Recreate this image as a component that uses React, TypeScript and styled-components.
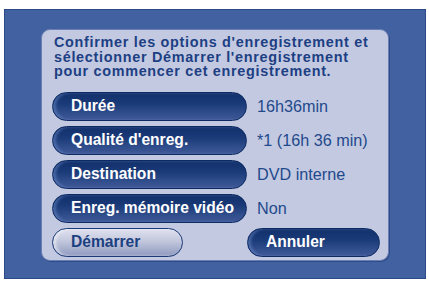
import * as React from 'react';
import styled, { createGlobalStyle } from 'styled-components';

const GlobalStyle = createGlobalStyle`
  body {
    margin: 0;
    background: #ffffff;
    font-family: 'Liberation Sans', Arial, sans-serif;
  }
`;

const Screen = styled.div`
  width: 429px;
  height: 282px;
  padding: 9px 3px 3px 4px;
  box-sizing: border-box;
`;

const Frame = styled.div`
  width: 422px;
  height: 270px;
  box-sizing: border-box;
  background: #4161a0;
  border: 1px solid #2c4a88;
  padding: 19px 36px 17px 36px;
`;

const Panel = styled.div`
  height: 100%;
  box-sizing: border-box;
  background: #c3c9e1;
  border: 1px solid #6a7fb4;
  border-radius: 9px;
  box-shadow: 1px 1px 0 #2f4c8a;
  padding: 5px 8px 0 10px;
  display: flex;
  flex-direction: column;
`;

const Intro = styled.p`
  margin: 0 0 13px 2px;
  font-size: 14.4px;
  line-height: 14.5px;
  letter-spacing: 0.7px;
  font-weight: bold;
  color: #1d3f83;
  white-space: nowrap;
`;

const Rows = styled.div`
  display: grid;
  grid-template-columns: 195px 1fr;
  column-gap: 10px;
  row-gap: 5px;
  align-items: center;
`;

const Pill = styled.div<{ $light?: boolean }>`
  height: 29px;
  box-sizing: border-box;
  border-radius: 15px;
  border: 1px solid ${(p) => (p.$light ? '#1d3a78' : '#0d2a62')};
  background: ${(p) =>
    p.$light
      ? 'linear-gradient(180deg, #dfe2ee 0%, #c2c7dd 45%, #8f9abf 100%)'
      : 'linear-gradient(180deg, #11306b 0%, #1a3a78 40%, #34508f 80%, #3f5796 100%)'};
  box-shadow: inset 3px 0 3px ${(p) => (p.$light ? 'rgba(255,255,255,0.5)' : 'rgba(120,150,210,0.45)')};
  color: ${(p) => (p.$light ? '#1c3f80' : '#ffffff')};
  font-size: 15.6px;
  font-weight: bold;
  display: flex;
  align-items: center;
  padding-left: 18px;
  white-space: nowrap;
`;

const Value = styled.div`
  color: #1f4a8c;
  font-size: 16.2px;
  white-space: nowrap;
`;

const Actions = styled.div`
  display: grid;
  grid-template-columns: 131px 133px;
  column-gap: 64px;
  margin-top: 5px;
`;

const rows = [
  ['Durée', '16h36min'],
  ["Qualité d'enreg.", '*1 (16h 36 min)'],
  ['Destination', 'DVD interne'],
  ['Enreg. mémoire vidéo', 'Non'],
];

export default function App() {
  return (
    <Screen>
      <GlobalStyle />
      <Frame>
        <Panel>
          <Intro>
            Confirmer les options d'enregistrement et
            <br />
            sélectionner Démarrer l'enregistrement
            <br />
            pour commencer cet enregistrement.
          </Intro>
          <Rows>
            {rows.map(([label, value]) => (
              <React.Fragment key={label}>
                <Pill>{label}</Pill>
                <Value>{value}</Value>
              </React.Fragment>
            ))}
          </Rows>
          <Actions>
            <Pill $light>Démarrer</Pill>
            <Pill>Annuler</Pill>
          </Actions>
        </Panel>
      </Frame>
    </Screen>
  );
}
